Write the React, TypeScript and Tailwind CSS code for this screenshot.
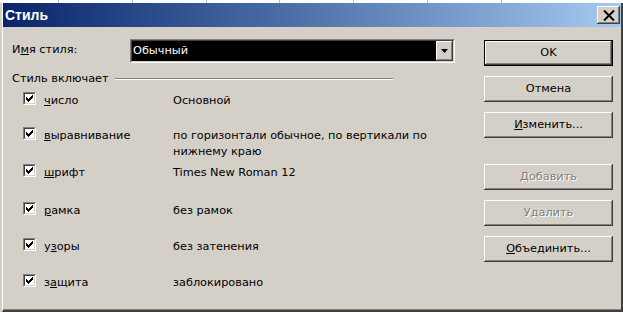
const ui = "font-['DejaVu_Sans',sans-serif] text-[11.3px] text-black"
const raised = "shadow-[inset_-1px_-1px_0_#404040,inset_1px_1px_0_#ffffff,inset_-2px_-2px_0_#808080]"

function Check() {
  const rows = [[6, 1], [5, 2], [0, 1, 4, 3], [0, 2, 3, 3], [0, 5], [1, 3], [2, 1]]
  return (
    <svg width="7" height="7" viewBox="0 0 7 7" shapeRendering="crispEdges">
      {rows.map((r, y) =>
        r.length === 2 ? (
          <rect key={y} x={r[0]} y={y} width={r[1]} height={1} fill="#000" />
        ) : (
          <g key={y}>
            <rect x={r[0]} y={y} width={r[1]} height={1} fill="#000" />
            <rect x={r[2]} y={y} width={r[3]} height={1} fill="#000" />
          </g>
        )
      )}
    </svg>
  )
}

function Checkbox() {
  return (
    <div className="w-[13px] h-[13px] shrink-0 border-t border-l border-t-[#808080] border-l-[#808080] border-b border-r border-b-white border-r-white">
      <div className="w-full h-full bg-white border-t border-l border-t-[#404040] border-l-[#404040] border-b border-r border-b-[#d4d0c8] border-r-[#d4d0c8] flex items-center justify-center">
        <Check />
      </div>
    </div>
  )
}

function Btn({ children, def, disabled, mt }: { children: React.ReactNode; def?: boolean; disabled?: boolean; mt: string }) {
  return (
    <div className={`${mt} h-[26px] w-full ${def ? "border border-black" : ""}`}>
      <div className={`h-full w-full flex items-center justify-center ${raised} ${disabled ? "text-[#808080] [text-shadow:1px_1px_0_#ffffff]" : ""}`}>
        {children}
      </div>
    </div>
  )
}

const items = [
  { top: "mt-[8px]", label: <><u>ч</u>исло</>, desc: <>Основной</> },
  { top: "mt-[18px]", label: <><u>в</u>ыравнивание</>, desc: <>по горизонтали обычное, по вертикали по<br />нижнему краю</> },
  { top: "mt-[4px]", label: <><u>ш</u>рифт</>, desc: <>Times New Roman 12</> },
  { top: "mt-[21px]", label: <><u>р</u>амка</>, desc: <>без рамок</> },
  { top: "mt-[19px]", label: <>у<u>з</u>оры</>, desc: <>без затенения</> },
  { top: "mt-[19px]", label: <>з<u>а</u>щита</>, desc: <>заблокировано</> },
]

export default function App() {
  return (
    <div className={`w-[623px] h-[312px] bg-[#d4d0c8] flex flex-col overflow-hidden ${ui}`}>
      {/* spreadsheet behind the dialog */}
      <div className="h-[3px] bg-white flex shrink-0">
        <div className="w-[58px]" />
        <div className="w-[74px] border-l border-[#c0c0c0]" />
        <div className="w-[74px] border-l border-[#c0c0c0]" />
        <div className="w-[73px] border-l border-[#c0c0c0]" />
        <div className="w-[74px] border-l border-[#c0c0c0]" />
        <div className="w-[74px] border-l border-[#c0c0c0]" />
        <div className="w-[74px] border-l border-[#c0c0c0]" />
        <div className="w-[74px] border-l border-[#c0c0c0]" />
      </div>

      <div className="flex-1 flex flex-col ml-[2px] border-l border-l-white border-r-2 border-r-[#404040] border-b-2 border-b-[#404040]">
        {/* title bar */}
        <div className="h-[24px] shrink-0 flex items-center justify-between bg-gradient-to-r from-[#0a246a] to-[#a6caf0] pl-[2px] pr-[1px]">
          <span className="font-['Liberation_Sans',sans-serif] font-bold text-[14px] text-white">Стиль</span>
          <div className={`w-[23px] h-[18px] bg-[#d4d0c8] flex items-center justify-center ${raised}`}>
            <svg width="12" height="11" viewBox="0 0 12 11">
              <path d="M1 0.5 L11 10.5 M11 0.5 L1 10.5" stroke="#000" strokeWidth="2" />
            </svg>
          </div>
        </div>

        {/* body */}
        <div className="flex-1 flex border-b border-b-[#808080]">
          <div className="flex-1 flex flex-col pl-[9px]">
            <div className="flex items-center mt-[12px]">
              <span className="w-[118px] -mt-[2px]">
                И<u>м</u>я стиля:
              </span>
              <div className="w-[325px] h-[24px] border-t border-l border-[#808080] border-b border-r border-b-white border-r-white">
                <div className="h-full flex border-t border-l border-[#404040] border-b border-r border-b-[#d4d0c8] border-r-[#d4d0c8]">
                  <div className="flex-1 bg-black text-white flex items-center pl-[1px]">Обычный</div>
                  <div className={`w-[17px] bg-[#d4d0c8] flex items-center justify-center ${raised}`}>
                    <svg width="7" height="4" viewBox="0 0 7 4">
                      <path d="M0 0 H7 L3.5 4 Z" fill="#000" />
                    </svg>
                  </div>
                </div>
              </div>
            </div>

            <div className="flex items-center mt-[9px] h-[14px]">
              <span>Стиль включает</span>
              <div className="ml-[6px] w-[278px] h-[2px] border-t border-t-[#808080] border-b border-b-white" />
            </div>

            <div className="flex flex-col pl-[11px] -mt-[2px]">
              {items.map((it, i) => (
                <div key={i} className={`flex items-start ${it.top}`}>
                  <Checkbox />
                  <span className="w-[137px] pl-[8px] leading-[16px] mt-[1px]">{it.label}</span>
                  <span className="leading-[16px] mt-[1px]">{it.desc}</span>
                </div>
              ))}
            </div>
          </div>

          <div className="w-[129px] mr-[8px] flex flex-col">
            <Btn mt="mt-[13px]" def>OK</Btn>
            <Btn mt="mt-[10px]">Отмена</Btn>
            <Btn mt="mt-[10px]"><span><u>И</u>зменить...</span></Btn>
            <Btn mt="mt-[26px]" disabled>Добавить</Btn>
            <Btn mt="mt-[10px]" disabled>Удалить</Btn>
            <Btn mt="mt-[10px]"><span><u>О</u>бъединить...</span></Btn>
          </div>
        </div>
      </div>
    </div>
  )
}
